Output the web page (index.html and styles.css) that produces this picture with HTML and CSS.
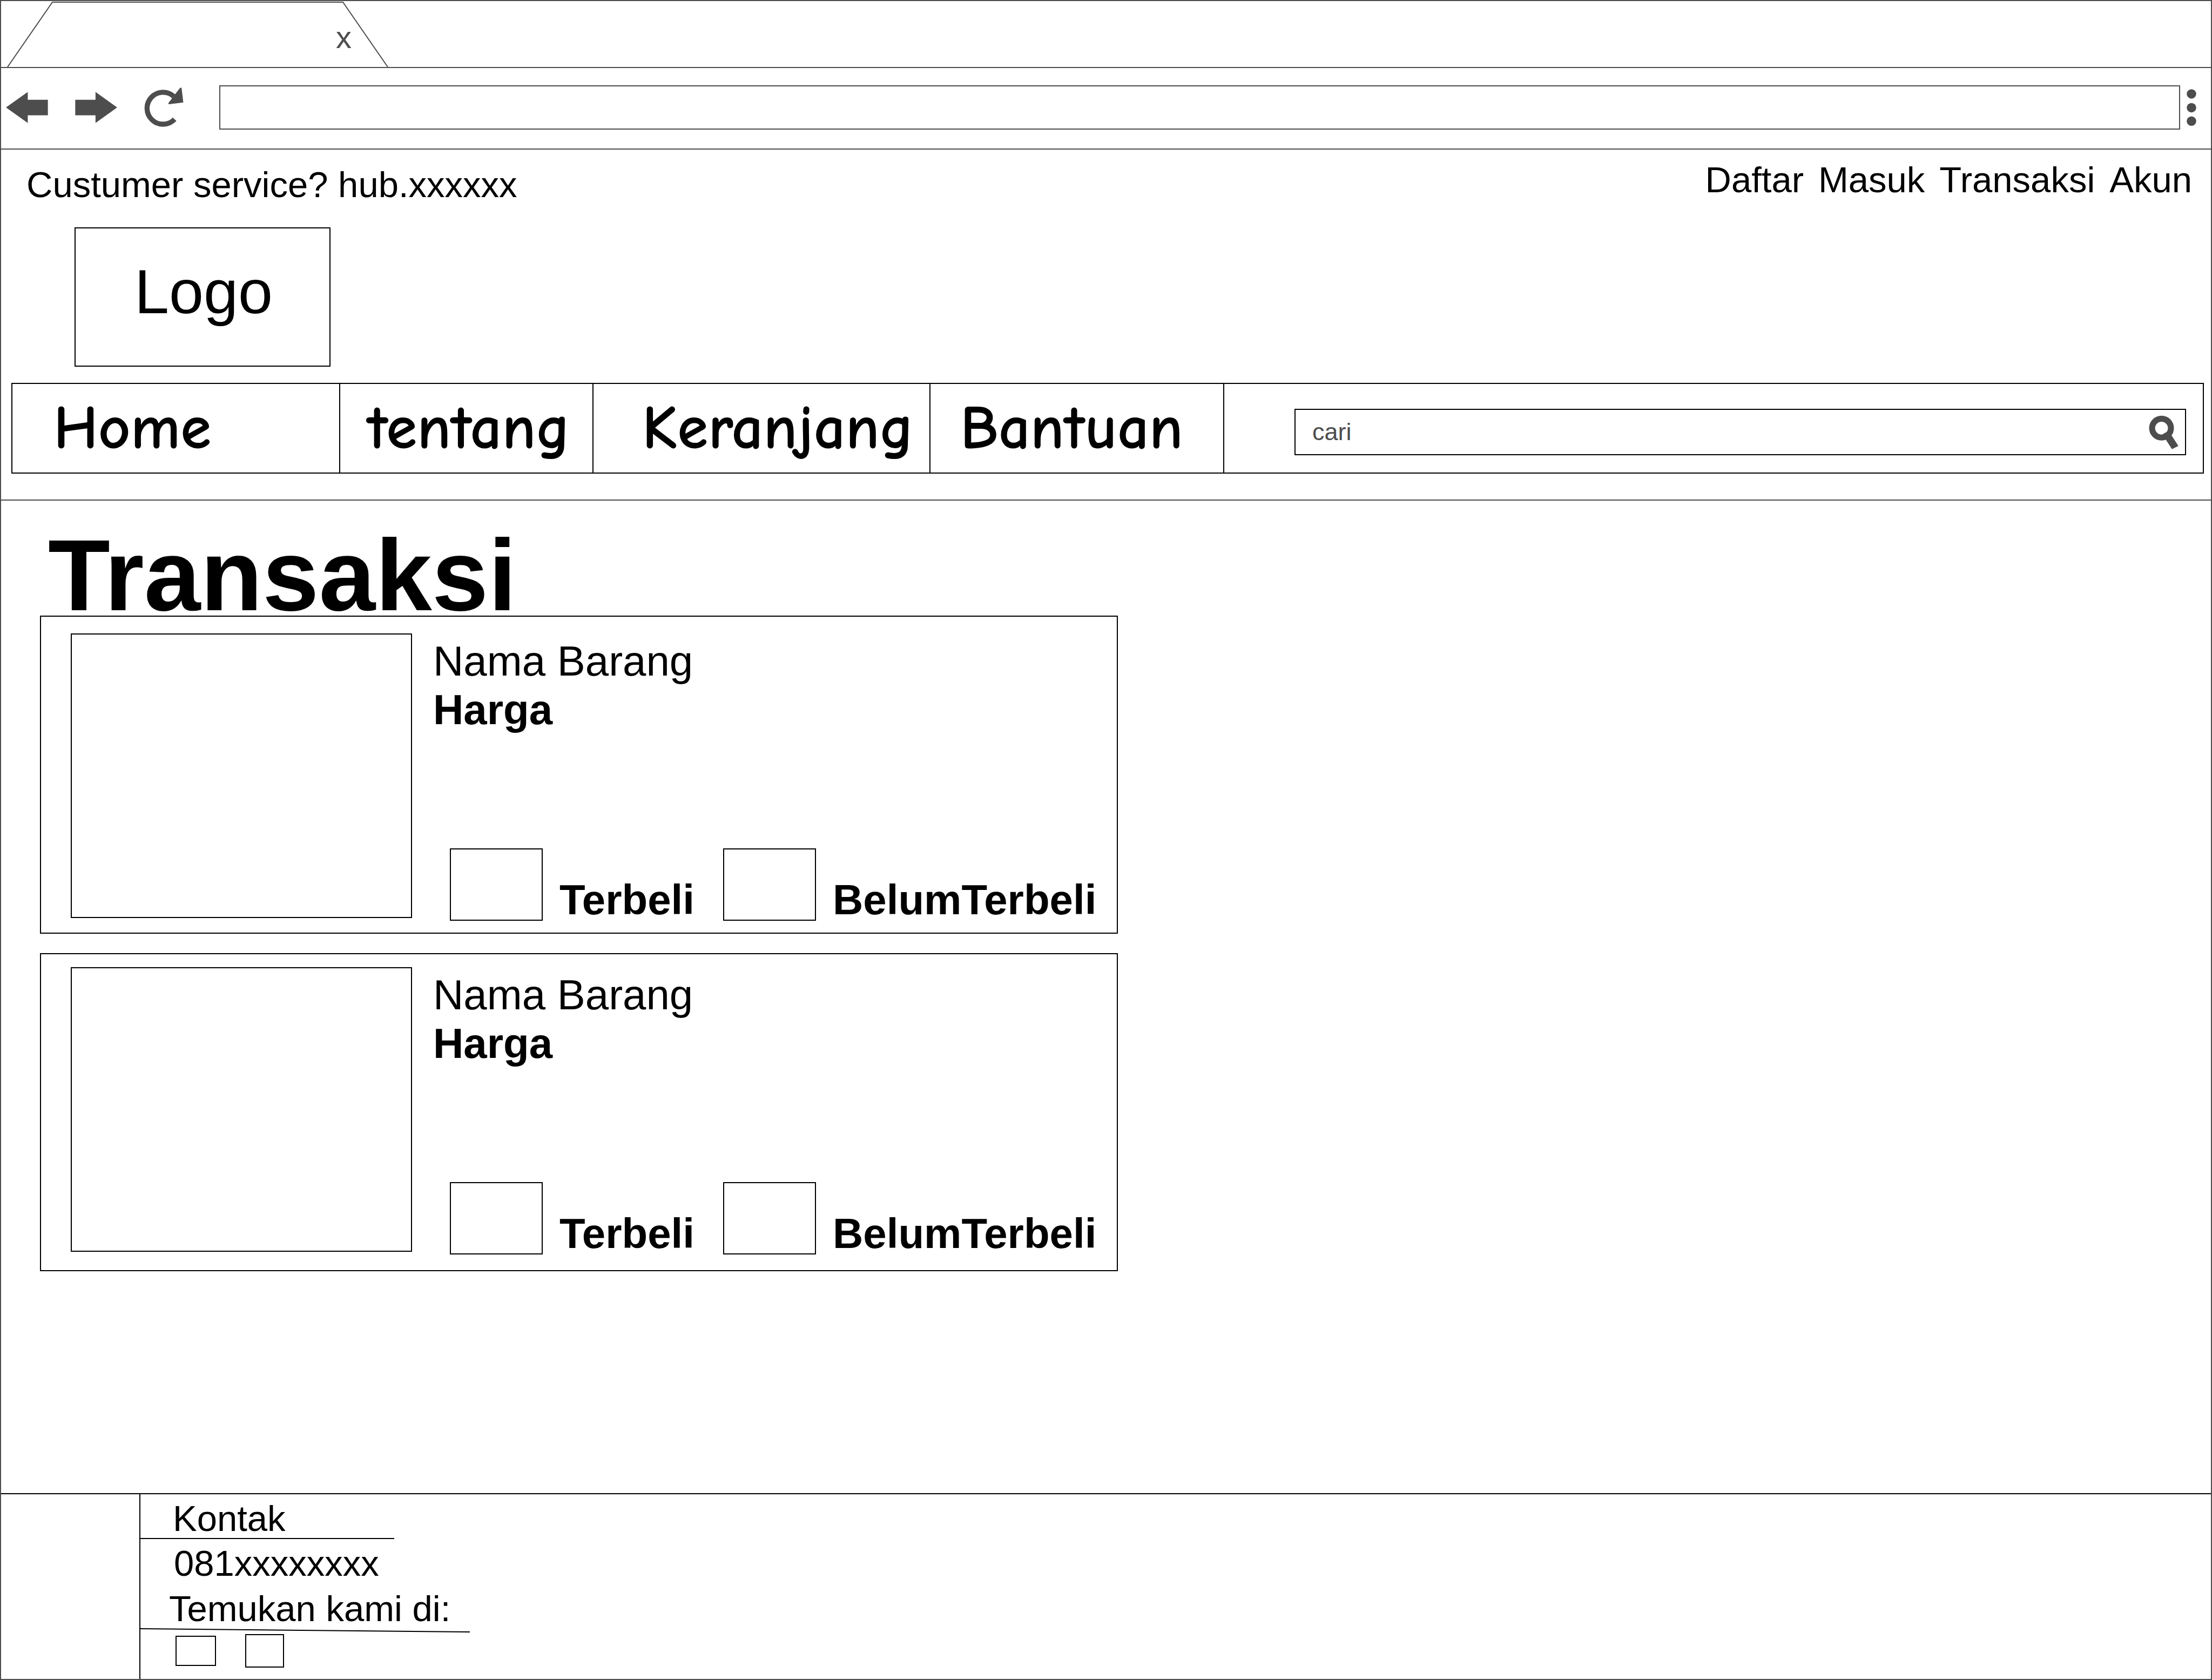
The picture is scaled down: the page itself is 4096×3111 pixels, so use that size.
FILE: index.html
```
<!DOCTYPE html>
<html lang="id">
<head>
  <meta charset="utf-8">
  <meta name="viewport" content="width=device-width, initial-scale=1">
  <title>Transaksi</title>
  <link rel="stylesheet" href="styles.css">
</head>
<body>
  <div class="window">
    <div class="tab-strip">
      <div class="tab">
        <svg class="tab-outline" viewBox="0 0 706 122" aria-hidden="true"><path d="M1 122 84 2H622L705 122" fill="none" stroke="currentColor" stroke-width="2"/></svg>
        <button class="tab-close" type="button">x</button>
      </div>
    </div>
    <div class="toolbar">
      <button class="tool" type="button" aria-label="Back">
        <svg class="icon-arrow" viewBox="40 122 274 204"><path d="M40 224 182 123V174H313V275H182V325Z"/></svg>
      </button>
      <button class="tool" type="button" aria-label="Forward">
        <svg class="icon-arrow" viewBox="486 122 274 204"><path d="M760 224 619 123V174H487V275H619V325Z"/></svg>
      </button>
      <button class="tool tool-reload" type="button" aria-label="Reload">
        <svg class="icon-reload" viewBox="938 82 256 258"><path d="M1136 290A104.500 104.500 0 1 1 1130 140" fill="none" stroke="currentColor" stroke-width="33"/><path d="M1140 125 1172 85Q1180 80 1182 88L1193 180 1100 192Q1093 190 1097 182L1120 152Z"/></svg>
      </button>
      <input class="address" type="text" aria-label="Address">
      <button class="tool tool-menu" type="button" aria-label="Menu">
        <svg class="icon-dots" viewBox="0 0 61 237"><circle cx="30.500" cy="31" r="30.500"/><circle cx="30.500" cy="120" r="30.500"/><circle cx="30.500" cy="206.500" r="30.500"/></svg>
      </button>
    </div>

    <header class="header">
      <div class="top-row">
        <p class="service">Custumer service? hub.xxxxxx</p>
        <nav class="account">
          <a href="#">Daftar</a>
          <a href="#">Masuk</a>
          <a href="#">Transaksi</a>
          <a href="#">Akun</a>
        </nav>
      </div>
      <div class="logo">Logo</div>
      <div class="menu">
        <nav class="menu-links">
          <a class="menu-home" href="#">Home</a>
          <a class="menu-about" href="#">tentang</a>
          <a class="menu-cart" href="#">Keranjang</a>
          <a class="menu-help" href="#">Bantuan</a>
        </nav>
        <form class="search">
          <input class="search-input" type="text" placeholder="cari" aria-label="cari">
          <button class="tool" type="button" aria-label="Search">
            <svg class="icon-search" viewBox="205 100 192 222"><circle cx="287" cy="184" r="61.500" fill="none" stroke="currentColor" stroke-width="39"/><path d="M292 225 318 210 350 228 397 300 355 321 312 254Z"/></svg>
          </button>
        </form>
      </div>
    </header>

    <main class="main">
      <h1 class="title">Transaksi</h1>
      <article class="card">
        <div class="thumb"></div>
        <div class="details">
          <div>
            <p class="name">Nama Barang</p>
            <p class="price">Harga</p>
          </div>
          <div class="options">
            <label class="option"><input class="check" type="checkbox">Terbeli</label>
            <label class="option"><input class="check" type="checkbox">BelumTerbeli</label>
          </div>
        </div>
      </article>
      <article class="card card-raised">
        <div class="thumb"></div>
        <div class="details">
          <div>
            <p class="name">Nama Barang</p>
            <p class="price">Harga</p>
          </div>
          <div class="options">
            <label class="option"><input class="check" type="checkbox">Terbeli</label>
            <label class="option"><input class="check" type="checkbox">BelumTerbeli</label>
          </div>
        </div>
      </article>
    </main>

    <footer class="footer">
      <div class="contact">
        <h2 class="contact-title">Kontak</h2>
        <p class="phone">081xxxxxxxx</p>
        <p class="find">Temukan kami di:</p>
        <svg class="slant" viewBox="0 0 610 8" aria-hidden="true"><path d="M0 1 610 7" fill="none" stroke="currentColor" stroke-width="2"/></svg>
        <div class="socials">
          <a class="social" href="#" aria-label="Social 1"></a>
          <a class="social social-tall" href="#" aria-label="Social 2"></a>
        </div>
      </div>
    </footer>
  </div>
</body>
</html>
```
FILE: styles.css
```
:root {
  --ink: #000;
  --chrome: #4d4d4d;
}

* {
  box-sizing: border-box;
}

body,
h1,
h2,
p {
  margin: 0;
}

body {
  background: #fff;
  color: var(--ink);
  font-family: "Liberation Sans", Arial, sans-serif;
  font-size: 67px;
  line-height: 72px;
}

a {
  color: inherit;
  text-decoration: none;
}

svg {
  display: block;
  fill: currentColor;
}

button,
input {
  margin: 0;
  padding: 0;
  border: 0;
  border-radius: 0;
  background: none;
  font-family: inherit;
  color: var(--chrome);
}

.window {
  display: flex;
  flex-direction: column;
  min-height: 100vh;
  border: 2px solid var(--chrome);
}

/* Browser chrome */
.tab-strip {
  display: flex;
  height: 124px;
  padding-left: 11px;
  border-bottom: 2px solid var(--chrome);
  color: var(--chrome);
}

.tab {
  position: relative;
  display: flex;
  align-items: center;
  justify-content: flex-end;
  width: 706px;
  padding: 11px 68px 0 0;
}

.tab-outline {
  position: absolute;
  left: 0;
  top: 0;
  width: 706px;
  height: 122px;
}

.tab-close {
  position: relative;
  font-size: 58px;
  line-height: 60px;
}

.toolbar {
  display: flex;
  align-items: center;
  height: 151px;
  padding: 0 27px 4px 9px;
  border-bottom: 2px solid var(--chrome);
}

.tool {
  flex: none;
}

.icon-arrow {
  width: 78px;
  height: 58px;
}

.tool + .tool {
  margin-left: 50px;
}

.icon-reload {
  width: 73px;
  height: 73px;
}

.address {
  flex: 1;
  min-width: 0;
  height: 82px;
  margin: 0 12px 0 66px;
  padding: 0 24px;
  border: 2px solid var(--chrome);
  font-size: 45px;
}

.icon-dots {
  width: 18px;
  height: 68px;
}

/* Site header */
.header {
  padding-bottom: 48px;
  border-bottom: 2px solid var(--chrome);
}

.top-row {
  display: flex;
  justify-content: space-between;
  padding: 20px 35px 0 47px;
}

.service {
  padding-top: 9px;
}

.account {
  display: flex;
  gap: 27px;
}

.logo {
  display: flex;
  align-items: center;
  justify-content: center;
  width: 474px;
  height: 258px;
  margin: 43px 0 0 136px;
  padding: 0 0 20px 4px;
  border: 2px solid var(--ink);
  font-size: 115px;
}

.menu {
  display: flex;
  align-items: center;
  height: 168px;
  margin: 30px 13px 0 19px;
  border: 2px solid var(--ink);
}

.menu-links {
  display: flex;
  align-self: stretch;
  font-family: "Comic Sans MS", "Comic Neue", "Comic Relief", fantasy;
  font-size: 116px;
  font-weight: 700;
}

.menu-links a {
  display: flex;
  align-items: center;
  border-right: 2px solid var(--ink);
}

.menu-home {
  width: 607px;
  padding-left: 76px;
}

.menu-about {
  width: 469px;
  padding-left: 50px;
}

.menu-cart {
  width: 624px;
  padding-left: 90px;
}

.menu-help {
  width: 544px;
  padding-left: 55px;
}

.search {
  display: flex;
  flex: 1;
  align-items: center;
  height: 86px;
  margin: 14px 31px 0 130px;
  padding-right: 12px;
  border: 2px solid var(--ink);
}

.search-input {
  flex: 1;
  min-width: 0;
  height: 100%;
  padding-left: 31px;
  font-size: 45px;
}

.search-input::placeholder {
  color: var(--chrome);
  opacity: 1;
}

.icon-search {
  width: 55px;
  height: 63px;
}

/* Transactions */
.main {
  flex: 1;
  padding: 63px 72px;
}

.title {
  padding-left: 15px;
  font-size: 188px;
  line-height: 150px;
}

.card {
  display: flex;
  align-items: flex-start;
  gap: 39px;
  width: 1996px;
  max-width: 100%;
  padding: 31px 41px 22px 55px;
  border: 2px solid var(--ink);
}

.card + .card {
  margin-top: 36px;
}

.card-raised {
  padding-top: 24px;
  padding-bottom: 29px;
}

.thumb {
  flex: none;
  width: 632px;
  height: 527px;
  border: 2px solid var(--ink);
}

.details {
  display: flex;
  flex: 1;
  flex-direction: column;
  justify-content: space-between;
  min-height: 532px;
  padding-top: 6px;
  font-size: 78px;
  line-height: 90px;
}

.price {
  font-weight: 700;
}

.options {
  display: grid;
  grid-template-columns: 506px 1fr;
  padding-left: 31px;
  font-weight: 700;
  line-height: 78px;
}

.option {
  display: flex;
  align-items: flex-end;
  gap: 31px;
}

.check {
  flex: none;
  width: 172px;
  height: 134px;
  border: 2px solid var(--ink);
  appearance: none;
}

.check:checked {
  background: var(--chrome);
}

/* Footer */
.footer {
  padding-left: 256px;
  border-top: 2px solid var(--ink);
}

.contact {
  padding: 9px 0 21px;
  border-left: 2px solid var(--ink);
}

.contact-title {
  width: 470px;
  padding-left: 60px;
  border-bottom: 2px solid var(--ink);
  font-size: 67px;
  font-weight: 400;
}

.phone {
  padding: 9px 0 0 62px;
}

.find {
  padding: 12px 0 0 53px;
}

.slant {
  width: 610px;
  height: 8px;
}

.socials {
  display: flex;
  align-items: center;
  gap: 54px;
  padding: 3px 0 0 65px;
}

.social {
  width: 75px;
  height: 56px;
  border: 2px solid var(--ink);
}

.social-tall {
  width: 72px;
  height: 62px;
}
```
